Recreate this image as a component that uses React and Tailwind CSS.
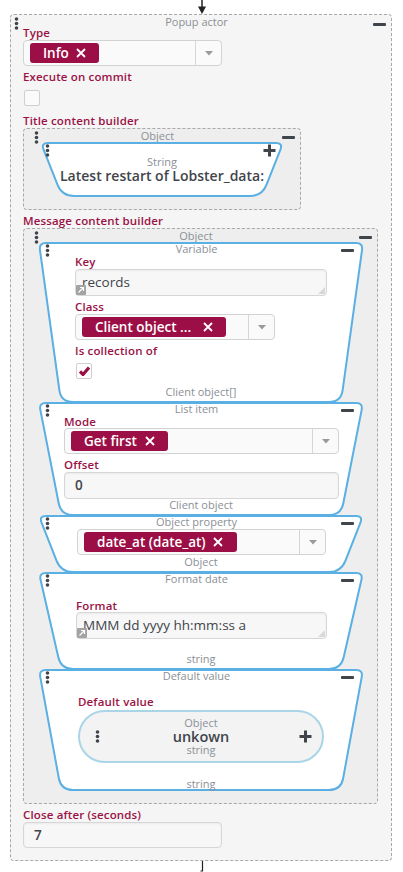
import React from "react";

function roundedPath(pts, radii) {
  const n = pts.length;
  let d = "";
  for (let i = 0; i < n; i++) {
    const p = pts[i];
    const a = pts[(i - 1 + n) % n];
    const b = pts[(i + 1) % n];
    const r = radii[i];
    const da = Math.hypot(a[0] - p[0], a[1] - p[1]);
    const db = Math.hypot(b[0] - p[0], b[1] - p[1]);
    const p1 = [p[0] + ((a[0] - p[0]) * r) / da, p[1] + ((a[1] - p[1]) * r) / da];
    const p2 = [p[0] + ((b[0] - p[0]) * r) / db, p[1] + ((b[1] - p[1]) * r) / db];
    d += `${i === 0 ? "M" : "L"}${p1[0]} ${p1[1]} Q${p[0]} ${p[1]} ${p2[0]} ${p2[1]} `;
  }
  return d + "Z";
}

function Trap({ w, h, inset = 22, className = "", children }) {
  const d = roundedPath(
    [
      [1, 1],
      [w - 1, 1],
      [w - 1 - inset, h - 1],
      [1 + inset, h - 1],
    ],
    [7, 7, 12, 12]
  );
  return (
    <div className={`relative ${className}`}>
      <svg className="absolute left-0 top-0" width={w} height={h} viewBox={`0 0 ${w} ${h}`}>
        <path d={d} fill="#ffffff" stroke="#5aafe3" strokeWidth="2" />
      </svg>
      <div className="relative h-full">{children}</div>
    </div>
  );
}

function Handle({ className = "" }) {
  return (
    <svg className={className} width="5" height="13" viewBox="0 0 5 13">
      <circle cx="2.5" cy="2" r="1.8" fill="#3f454b" />
      <circle cx="2.5" cy="6.5" r="1.8" fill="#3f454b" />
      <circle cx="2.5" cy="11" r="1.8" fill="#3f454b" />
    </svg>
  );
}

function Minus({ className = "" }) {
  return <div className={`h-[3px] w-[13px] rounded-[1px] bg-[#3f454b] ${className}`} />;
}

function Plus({ className = "" }) {
  return (
    <svg className={className} width="13" height="13" viewBox="0 0 13 13">
      <path d="M6.5 0.5V12.5M0.5 6.5H12.5" stroke="#3f454b" strokeWidth="3" />
    </svg>
  );
}

function XIcon() {
  return (
    <svg width="10" height="10" viewBox="0 0 10 10">
      <path d="M1 1L9 9M9 1L1 9" stroke="#ffffff" strokeWidth="1.8" />
    </svg>
  );
}

function Caret() {
  return (
    <svg width="8" height="5" viewBox="0 0 8 5">
      <path d="M0 0H8L4 4.5Z" fill="#9a9a9a" />
    </svg>
  );
}

function Label({ children, className = "" }) {
  return (
    <div
      className={`h-[12px] whitespace-nowrap text-[11.5px] font-semibold leading-[12px] tracking-[0.15px] text-[#9a1245] ${className}`}
    >
      {children}
    </div>
  );
}

function Title({ children, className = "" }) {
  return (
    <div className={`pr-[9px] text-center text-[11px] leading-[13px] text-[#8b9096] ${className}`}>{children}</div>
  );
}

function Chip({ children, className = "" }) {
  return (
    <div
      className={`flex h-[20px] items-center justify-between gap-[7px] rounded-[3px] bg-[#9c0f46] pl-[13px] pr-[13px] text-[13.5px] font-semibold text-white ${className}`}
    >
      <span className="whitespace-nowrap leading-[20px]">{children}</span>
      <XIcon />
    </div>
  );
}

function Select({ className = "", chip, chipClass = "" }) {
  return (
    <div className={`flex h-[26px] items-stretch rounded-[4px] border border-[#d3d3d3] bg-[#fafafa] ${className}`}>
      <div className="flex flex-1 items-center pl-[6px]">
        <Chip className={chipClass}>{chip}</Chip>
      </div>
      <div className="w-px bg-[#d6d6d6]" />
      <div className="flex w-[25px] items-center justify-center">
        <Caret />
      </div>
    </div>
  );
}

function ResizeIcon() {
  return (
    <svg className="absolute bottom-0 left-0" width="10" height="10" viewBox="0 0 10 10">
      <rect width="10" height="10" rx="1" fill="#a3a3a3" />
      <path d="M2.5 7.5L7.5 2.5M4 2.5H7.5V6" stroke="#ffffff" strokeWidth="1.2" fill="none" />
    </svg>
  );
}

function Grip() {
  return (
    <svg className="absolute bottom-[1px] right-[1px]" width="7" height="7" viewBox="0 0 7 7">
      <path d="M7 0L0 7H7Z" fill="#d8d8d8" />
    </svg>
  );
}

function TextArea({ className = "", children }) {
  return (
    <div
      className={`relative flex h-[27px] items-center rounded-[4px] border border-[#d6d6d6] bg-[#f7f7f7] pl-[6px] text-[13.5px] font-medium text-[#3f454b] shadow-[inset_0_1px_2px_rgba(0,0,0,0.05)] ${className}`}
    >
      <span className="whitespace-nowrap">{children}</span>
      <ResizeIcon />
      <Grip />
    </div>
  );
}

function Input({ className = "", children }) {
  return (
    <div
      className={`flex h-[26px] items-center rounded-[4px] border border-[#d6d6d6] bg-[#f7f7f7] pl-[10px] text-[13.5px] font-semibold text-[#3f454b] shadow-[inset_0_1px_2px_rgba(0,0,0,0.05)] ${className}`}
    >
      {children}
    </div>
  );
}

function TrapHead({ title }) {
  return (
    <>
      <Handle className="absolute left-[7px] top-[2px]" />
      <Minus className="absolute right-[10px] top-[7px]" />
      <Title className="h-[14px] leading-[14px]">{title}</Title>
    </>
  );
}

function Bottom({ children, className = "" }) {
  return <div className={`text-center text-[11px] leading-[12px] text-[#8b9096] ${className}`}>{children}</div>;
}

export default function App() {
  return (
    <div className="h-[872px] w-[403px] overflow-hidden bg-white font-['Open_Sans',sans-serif]">
      <div className="flex h-[14px] justify-center">
        <svg width="10" height="14" viewBox="0 0 10 14">
          <path d="M5 0V8" stroke="#222222" strokeWidth="1.5" />
          <path d="M1 6.5H9L5 14Z" fill="#222222" />
        </svg>
      </div>

      <div className="relative ml-[10px] w-[382px] rounded-[4px] border border-dashed border-[#a8a8a8] bg-[#f5f5f5] pb-[12px] pl-[12px]">
        <Handle className="absolute left-[3px] top-[2px]" />
        <Minus className="absolute right-[5px] top-[8px]" />
        <Title className="-ml-[12px] h-[12px] leading-[12px]">Popup actor</Title>

        <Label>Type</Label>
        <Select className="mt-[1px] w-[199px]" chip="Info" chipClass="pl-[12px]" />

        <Label className="mt-[5px]">Execute on commit</Label>
        <div className="ml-[1px] mt-[7px] h-[16px] w-[16px] rounded-[2px] border border-[#cfcfcf] bg-[#fafafa]" />

        <Label className="mt-[9px]">Title content builder</Label>
        <div className="relative mt-[1px] w-[278px] rounded-[4px] border border-dashed border-[#a8a8a8] bg-[#eeeeee] pb-[12px]">
          <Handle className="absolute left-[10px] top-[2px]" />
          <Minus className="absolute right-[5px] top-[7px]" />
          <Title>Object</Title>
          <Trap w={244} h={55} inset={21} className="ml-[16px] h-[55px] w-[244px]">
            <Handle className="absolute left-[5px] top-[2px]" />
            <Plus className="absolute right-[8px] top-[2px]" />
            <div className="pt-[13px] text-center">
              <div className="text-[11px] leading-[13px] text-[#8b9096]">String</div>
              <div className="text-[14px] font-semibold leading-[16px] text-[#3f454b]">Latest restart of Lobster_data:</div>
            </div>
          </Trap>
        </div>

        <Label className="mt-[5px]">Message content builder</Label>
        <div className="relative mt-[1px] w-[355px] rounded-[4px] border border-dashed border-[#a8a8a8] bg-[#eeeeee] pb-[12px]">
          <Handle className="absolute left-[10px] top-[2px]" />
          <Minus className="absolute right-[5px] top-[7px]" />
          <Title>Object</Title>

          <Trap w={326} h={161} className="ml-[14px] h-[161px] w-[326px]">
            <TrapHead title="Variable" />
            <div className="pl-[37px]">
              <Label>Key</Label>
              <TextArea className="mt-[1px] w-[252px]">records</TextArea>
              <Label className="mt-[5px]">Class</Label>
              <Select className="mt-[1px] w-[200px]" chip="Client object ..." chipClass="w-[144px]" />
              <Label className="mt-[5px]">Is collection of</Label>
              <div className="ml-[1px] mt-[6px] flex h-[16px] w-[16px] items-center justify-center rounded-[2px] border border-[#cfcfcf] bg-white">
                <svg width="11" height="10" viewBox="0 0 11 10">
                  <path d="M1 5.5L4 8.5L10 1.5" stroke="#9a1245" strokeWidth="3.2" fill="none" />
                </svg>
              </div>
            </div>
            <Bottom className="mt-[7px]">Client object[]</Bottom>
          </Trap>

          <Trap w={326} h={114} className="-mt-[1px] ml-[14px] h-[114px] w-[326px]">
            <TrapHead title="List item" />
            <div className="pl-[26px]">
              <Label>Mode</Label>
              <Select className="w-[275px]" chip="Get first" chipClass="gap-[8px]" />
              <Label className="mt-[5px]">Offset</Label>
              <Input className="mt-[1px] h-[27px] w-[275px]">0</Input>
            </div>
            <Bottom>Client object</Bottom>
          </Trap>

          <Trap w={326} h={58} className="-mt-[1px] ml-[14px] h-[58px] w-[326px]">
            <TrapHead title="Object property" />
            <div className="pl-[39px]">
              <Select className="w-[249px]" chip="date_at (date_at)" chipClass="gap-[7px] pr-[14px]" />
            </div>
            <Bottom className="mt-[1px]">Object</Bottom>
          </Trap>

          <Trap w={326} h={98} className="-mt-[1px] ml-[14px] h-[98px] w-[326px]">
            <TrapHead title="Format date" />
            <div className="pl-[38px]">
              <Label className="mt-[14px]">Format</Label>
              <TextArea className="w-[251px]">MMM dd yyyy hh:mm:ss a</TextArea>
            </div>
            <Bottom className="mt-[14px]">string</Bottom>
          </Trap>

          <Trap w={326} h={122} className="-mt-[1px] ml-[14px] h-[122px] w-[326px]">
            <TrapHead title="Default value" />
            <div className="pl-[40px]">
              <Label className="mt-[13px]">Default value</Label>
              <div className="relative mt-[2px] h-[53px] w-[246px] rounded-full border-2 border-[#a9d5e6] bg-[#f3f3f3] pt-[4px] text-center">
                <Handle className="absolute left-[15px] top-[18px]" />
                <Plus className="absolute right-[10px] top-[18px]" />
                <div className="text-[11px] leading-[13px] text-[#8b9096]">Object</div>
                <div className="text-[14.5px] font-semibold leading-[15px] text-[#3f454b]">unkown</div>
                <div className="text-[11px] leading-[12px] text-[#8b9096]">string</div>
              </div>
            </div>
            <Bottom className="mt-[15px]">string</Bottom>
          </Trap>
        </div>

        <Label className="mt-[5px]">Close after (seconds)</Label>
        <Input className="mt-[1px] w-[199px]">7</Input>
      </div>

      <div className="flex justify-center">
        <svg width="6" height="11" viewBox="0 0 6 11">
          <path d="M3.5 0V10H1.5" stroke="#222222" strokeWidth="1.2" fill="none" />
        </svg>
      </div>
    </div>
  );
}
